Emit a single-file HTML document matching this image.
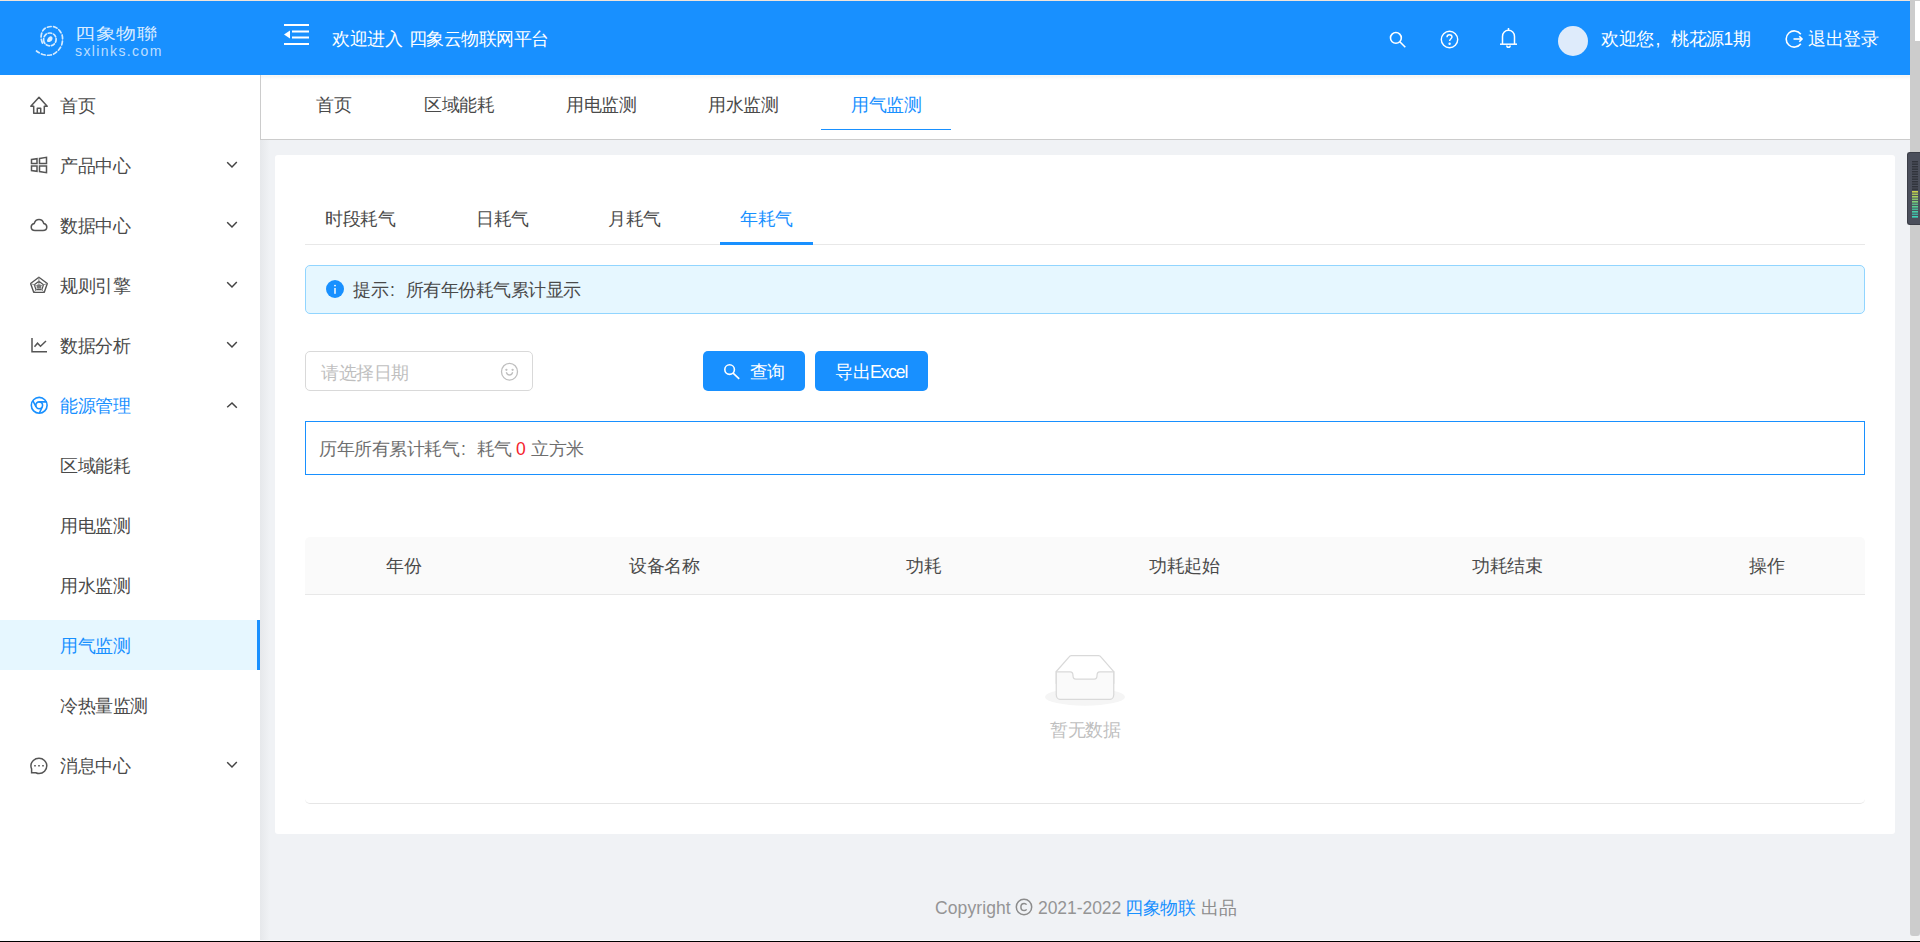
<!DOCTYPE html>
<html><head><meta charset="utf-8">
<style>
*{box-sizing:border-box;margin:0;padding:0}
html,body{width:1920px;height:942px;overflow:hidden;background:#f0f2f5;font-family:"Liberation Sans",sans-serif;font-size:17.5px;letter-spacing:-0.5px;color:#4a4a4a}
.abs{position:absolute}
.t{position:absolute;white-space:nowrap;line-height:20px}
#topline{left:0;top:0;width:1910px;height:1px;background:#f0e4da}
#header{left:0;top:1px;width:1910px;height:74px;background:#1890ff}
#sider{left:0;top:75px;width:260px;height:865px;background:#fff}
#sshadow{left:260px;top:140px;width:10px;height:800px;background:linear-gradient(90deg,#e6e8eb,#f0f2f5)}
#tabbar{left:260px;top:75px;width:1650px;height:65px;background:#fff;border-left:1px solid #ccc;border-bottom:1px solid #ccc}
#card{left:275px;top:155px;width:1620px;height:679px;background:#fff;border-radius:3px}
#vscroll{left:1910px;top:0;width:10px;height:936px;background:#cccccc;border-radius:0 0 3px 3px}
#bottomline{left:0;top:941px;width:1920px;height:1px;background:#000}
#bottomlight{left:0;top:940px;width:1920px;height:1px;background:#fbfcfd}
.mi{position:absolute;left:0;width:260px;height:50px}
.mi .ic{position:absolute;left:30px;top:16px;width:18px;height:18px}
.mi .tx{position:absolute;left:60px;top:16px;line-height:20px;white-space:nowrap}
.mi .ar{position:absolute;left:226px;top:21px;width:12px;height:8px}
.fw{display:inline-block;width:17.5px;padding-left:2px;letter-spacing:0}
.sel{background:#e6f7ff;color:#1890ff}
.sel:after{content:"";position:absolute;right:0;top:0;width:3px;height:50px;background:#1890ff}
</style></head><body>
<div class="abs" id="topline"></div>
<div class="abs" id="header"></div>
<div class="abs" id="sider"></div>
<div class="abs" id="sshadow"></div>
<div class="abs" id="tabbar"></div>
<div class="abs" id="card"></div>

<div class="abs" style="left:261px;top:75px;width:1649px;height:5px;background:linear-gradient(#fcfaf3 0,#f4f5f5 25%,#fafbfb 60%,#fff 100%)"></div>
<!-- header content -->
<svg class="abs" style="left:30px;top:20px" width="40" height="40" viewBox="0 0 40 40" fill="none" stroke="rgba(255,255,255,.82)" stroke-width="1.7" stroke-linecap="round">
  <path d="M12.5 23 C11 20 10.8 16.5 11.5 14 C12.3 11 13.5 9.3 15.5 8 C17.8 6.8 20.5 6.3 23 6.5 C25.8 7 27.8 8.5 29.5 10.5 C31.2 12.8 32.5 15 32.5 17.5 C32.7 20.5 32.3 23 31.5 25.5 C30.3 28 29 30 27 31.5 C25 33.5 23 34.6 20.5 35 C18 35.5 15.5 35.2 13 34.5 C10.5 33.7 8.3 32.5 6.5 31" stroke-dasharray="3.8 2.4"/>
  <path d="M14 22 C13.2 19.5 13.6 16.8 15.5 14.8 C17.5 12.8 20.5 12.5 23 13.8 C25.2 15 26.5 17.5 26 20.5 C25.5 23.5 23 25.8 20 25.8 C17.5 25.8 15.3 24.5 14 22" stroke-dasharray="3.4 2"/>
  <path d="M17 20.5 C17.5 18.5 18.5 17 20 16.5 C21.5 16 22.8 17 22.5 18.8 C22.2 20.5 21 21.8 19.5 22 C18 22.2 16.8 21.8 17 20.5Z" fill="rgba(255,255,255,.85)" stroke="none"/>
</svg>
<div class="t" style="left:75px;top:25px;color:rgba(255,255,255,.85);font-size:20px;letter-spacing:0.6px;line-height:20px;transform:scaleY(.8);transform-origin:0 0">四象物聯</div>
<div class="t" style="left:75px;top:41px;color:rgba(255,255,255,.72);font-size:14px;letter-spacing:1.4px;line-height:20px">sxlinks.com</div>

<svg class="abs" style="left:284px;top:24px" width="25" height="21" viewBox="0 0 25 21" fill="#fff">
  <rect x="0" y="0" width="25" height="2"/><rect x="8" y="6.5" width="17" height="2"/><rect x="8" y="12.5" width="17" height="2"/><rect x="0" y="19" width="25" height="2"/>
  <path d="M0 10.5 L6 6.5 L6 14.5Z"/>
</svg>
<div class="t" style="left:332px;top:29px;color:#fff;word-spacing:2.5px">欢迎进入 四象云物联网平台</div>

<!-- header right icons -->
<svg class="abs" style="left:1388.5px;top:31px" width="18" height="18" viewBox="0 0 18 18" fill="none" stroke="#fff" stroke-width="1.6">
  <circle cx="6.9" cy="6.9" r="5.4"/><path d="M10.8 10.8 L16.3 16.3"/>
</svg>
<svg class="abs" style="left:1440px;top:30px" width="19" height="19" viewBox="0 0 19 19" fill="none" stroke="#fff" stroke-width="1.4">
  <circle cx="9.5" cy="9.5" r="8.2"/><path d="M7 7.3 C7 5.8 8.1 4.8 9.5 4.8 C10.9 4.8 12 5.8 12 7.1 C12 8.6 9.6 9 9.6 11"/><circle cx="9.6" cy="13.7" r=".5" fill="#fff"/>
</svg>
<svg class="abs" style="left:1499px;top:27px" width="19" height="22" viewBox="0 0 19 22" fill="none" stroke="#fff" stroke-width="1.5">
  <path d="M3.5 17 V9.5 C3.5 5.8 6.2 3.3 9.5 3.3 C12.8 3.3 15.5 5.8 15.5 9.5 V17"/><path d="M1 17.2 H18"/><path d="M9.5 1 V3.3"/><path d="M7.8 18.5 C7.8 19.8 8.6 20.3 9.5 20.3 C10.4 20.3 11.2 19.8 11.2 18.5"/>
</svg>
<div class="abs" style="left:1558px;top:26px;width:30px;height:30px;border-radius:50%;background:#deebfb"></div>
<div class="t" style="left:1601px;top:29px;color:#fff">欢迎您<span class="fw">,</span>桃花源1期</div>
<svg class="abs" style="left:1784px;top:29px" width="20" height="20" viewBox="0 0 20 20" fill="none" stroke="#fff" stroke-width="1.6">
  <path d="M16.8 5.2 A8.1 8.1 0 1 0 16.8 14.8"/><path d="M9.5 10 H18"/><path d="M15.3 7.3 L18 10 L15.3 12.7"/>
</svg>
<div class="t" style="left:1808px;top:29px;color:#fff">退出登录</div>

<!-- sidebar menu -->
<div class="mi" style="top:80px">
  <svg class="ic" style="left:29px;top:15px;width:20px;height:20px" viewBox="0 0 20 20" fill="none" stroke="#555" stroke-width="1.5" stroke-linejoin="round"><path d="M1.8 11.2 L10 2.3 L18.2 11.2 H15.3 V18.2 H4.7 V11.2Z M8.3 18.2 V13.3 H11.7 V18.2"/></svg>
  <div class="tx">首页</div>
</div>
<div class="mi" style="top:140px">
  <svg class="ic" viewBox="0 0 18 18" fill="none" stroke="#555" stroke-width="1.5"><path d="M1.5 3.5 L7 2.7 V7.5 H1.5Z M9.5 2.4 L16.5 1.3 V7.5 H9.5Z M1.5 10 H7 V15.3 L1.5 14.5Z M9.5 10 H16.5 V16.7 L9.5 15.6Z"/></svg>
  <div class="tx">产品中心</div>
  <svg class="ar" viewBox="0 0 12 8" fill="none" stroke="#444" stroke-width="1.5"><path d="M1.2 1.3 L6 6 L10.8 1.1"/></svg>
</div>
<div class="mi" style="top:200px">
  <svg class="ic" viewBox="0 0 18 18" fill="none" stroke="#555" stroke-width="1.5"><path d="M5 14.5 H13 C15.2 14.5 16.8 13 16.8 11 C16.8 9.1 15.5 7.8 13.8 7.5 C13 5 11.2 3.6 9 3.6 C6.8 3.6 5 5 4.2 7.5 C2.5 7.8 1.2 9.1 1.2 11 C1.2 13 2.8 14.5 5 14.5Z"/></svg>
  <div class="tx">数据中心</div>
  <svg class="ar" viewBox="0 0 12 8" fill="none" stroke="#444" stroke-width="1.5"><path d="M1.2 1.3 L6 6 L10.8 1.1"/></svg>
</div>
<div class="mi" style="top:260px">
  <svg class="ic" viewBox="0 0 18 18" fill="none" stroke="#555" stroke-width="1.4" stroke-linejoin="round"><path d="M8.9 1.3 L17.3 7.5 L14.2 16.4 H3.8 L0.6 7.5Z"/><path d="M8.9 5.2 L13.5 8.7 L11.8 13.7 H6 L4.3 8.7Z" stroke-width="1.2"/><path d="M8.9 1.3 V10.5 M17.3 7.5 L8.9 10.5 L0.6 7.5 M14.2 16.4 L8.9 10.5 L3.8 16.4" stroke-width=".9" stroke="#888"/><path d="M7.3 8.5 L10.5 8.5 L11.5 11.5 L8.9 13 L6.5 11.5Z" fill="#777" stroke="none"/></svg>
  <div class="tx">规则引擎</div>
  <svg class="ar" viewBox="0 0 12 8" fill="none" stroke="#444" stroke-width="1.5"><path d="M1.2 1.3 L6 6 L10.8 1.1"/></svg>
</div>
<div class="mi" style="top:320px">
  <svg class="ic" viewBox="0 0 18 18" fill="none" stroke="#555" stroke-width="1.5"><path d="M2 2 V15.7 H17"/><path d="M4.5 10.7 L7.5 7.2 L10.5 10.3 L16 5"/></svg>
  <div class="tx">数据分析</div>
  <svg class="ar" viewBox="0 0 12 8" fill="none" stroke="#444" stroke-width="1.5"><path d="M1.2 1.3 L6 6 L10.8 1.1"/></svg>
</div>
<div class="mi" style="top:380px;color:#1890ff">
  <svg class="ic" style="top:16px" viewBox="0 0 18 18" fill="none" stroke="#1890ff" stroke-width="1.6"><circle cx="9.2" cy="9.3" r="7.9"/><circle cx="9.2" cy="9.3" r="3.4"/><path d="M9.2 5.9 H16.6 M2.8 4.6 L6.1 10.8 M12.2 11 L9.4 17"/></svg>
  <div class="tx">能源管理</div>
  <svg class="ar" viewBox="0 0 12 8" fill="none" stroke="#444" stroke-width="1.5"><path d="M1.2 6.3 L6 2 L10.8 6.8"/></svg>
</div>
<div class="mi" style="top:440px"><div class="tx">区域能耗</div></div>
<div class="mi" style="top:500px"><div class="tx">用电监测</div></div>
<div class="mi" style="top:560px"><div class="tx">用水监测</div></div>
<div class="mi sel" style="top:620px"><div class="tx">用气监测</div></div>
<div class="mi" style="top:680px"><div class="tx">冷热量监测</div></div>
<div class="mi" style="top:740px">
  <svg class="ic" style="top:16.7px" viewBox="0 0 18 18" fill="none" stroke="#555" stroke-width="1.5"><path d="M9 1.3 C13.2 1.3 16.8 4.6 16.8 8.8 C16.8 13 13.4 16.6 9 16.6 C7.8 16.6 6.9 16.3 5.8 15.8 H1.6 V11.8 C1.1 10.9 .9 9.9 .9 8.8 C.9 4.6 4.6 1.3 9 1.3Z"/><path d="M4.2 8.8 H5.8 M8.2 8.8 H9.8 M12.2 8.8 H13.8" stroke-width="1.6"/></svg>
  <div class="tx">消息中心</div>
  <svg class="ar" viewBox="0 0 12 8" fill="none" stroke="#444" stroke-width="1.5"><path d="M1.2 1.3 L6 6 L10.8 1.1"/></svg>
</div>

<!-- top tabs -->
<div class="t" style="left:316px;top:95px">首页</div>
<div class="t" style="left:424px;top:95px">区域能耗</div>
<div class="t" style="left:566px;top:95px">用电监测</div>
<div class="t" style="left:708px;top:95px">用水监测</div>
<div class="t" style="left:851px;top:95px;color:#1890ff">用气监测</div>
<div class="abs" style="left:821px;top:129px;width:130px;height:1px;background:#1890ff"></div>

<!-- inner tabs -->
<div class="t" style="left:325px;top:209px">时段耗气</div>
<div class="t" style="left:476px;top:209px">日耗气</div>
<div class="t" style="left:608px;top:209px">月耗气</div>
<div class="t" style="left:740px;top:209px;color:#1890ff">年耗气</div>
<div class="abs" style="left:305px;top:244px;width:1560px;height:1px;background:#e8e8e8"></div>
<div class="abs" style="left:720px;top:242px;width:93px;height:3px;background:#1890ff"></div>

<!-- alert -->
<div class="abs" style="left:305px;top:265px;width:1560px;height:49px;background:#e6f7ff;border:1px solid #91d5ff;border-radius:5px"></div>
<svg class="abs" style="left:326px;top:280px" width="18" height="18" viewBox="0 0 18 18"><circle cx="9" cy="9" r="9" fill="#1890ff"/><rect x="8.1" y="8" width="1.8" height="5.8" fill="#d3e9ff"/><rect x="8.1" y="4.9" width="1.8" height="1.4" fill="#eef6ff"/></svg>
<div class="t" style="left:353px;top:280px">提示<span class="fw">:</span>所有年份耗气累计显示</div>

<!-- date input -->
<div class="abs" style="left:305px;top:351px;width:228px;height:40px;border:1px solid #d9d9d9;border-radius:5px;background:#fff"></div>
<div class="t" style="left:321px;top:363px;color:#bfbfbf">请选择日期</div>
<svg class="abs" style="left:500px;top:361.5px" width="19" height="19" viewBox="0 0 19 19" fill="none" stroke="#bfbfbf" stroke-width="1.3"><ellipse cx="9.5" cy="9.7" rx="8" ry="8.4"/><path d="M6.3 10.2 C7 12.3 8.2 13 9.5 13 C10.8 13 12 12.3 12.7 10.2"/><circle cx="6.4" cy="7.8" r=".5"/><circle cx="12.6" cy="7.8" r=".5"/></svg>

<!-- buttons -->
<div class="abs" style="left:703px;top:351px;width:102px;height:40px;background:#1890ff;border-radius:5px"></div>
<svg class="abs" style="left:723px;top:364px" width="17" height="17" viewBox="0 0 17 17" fill="none" stroke="#fff" stroke-width="1.6"><circle cx="6.6" cy="5.6" r="4.8"/><path d="M10.1 9.1 L16.2 14.8"/></svg>
<div class="t" style="left:749.5px;top:362px;color:#fff">查询</div>
<div class="abs" style="left:815px;top:351px;width:113px;height:40px;background:#1890ff;border-radius:5px"></div>
<div class="t" style="left:835px;top:362px;color:#fff">导出<span style="letter-spacing:-1.1px">Excel</span></div>

<!-- summary -->
<div class="abs" style="left:305px;top:421px;width:1560px;height:54px;border:1px solid #1890ff;background:#fff"></div>
<div class="t" style="left:319px;top:439px;color:#6e6e6e">历年所有累计耗气<span class="fw">:</span>耗气 <span style="color:#f5222d;margin-right:2px">0</span> 立方米</div>

<!-- table -->
<div class="abs" style="left:305px;top:537px;width:1560px;height:58px;background:#fafafa;border-bottom:1px solid #e8e8e8;border-radius:5px 5px 0 0"></div>
<div class="t" style="left:386px;top:556px">年份</div>
<div class="t" style="left:629px;top:556px">设备名称</div>
<div class="t" style="left:906px;top:556px">功耗</div>
<div class="t" style="left:1149px;top:556px">功耗起始</div>
<div class="t" style="left:1472px;top:556px">功耗结束</div>
<div class="t" style="left:1749px;top:556px">操作</div>
<div class="abs" style="left:305px;top:794px;width:1560px;height:10px;border-bottom:1px solid #e6e6e6;border-radius:0 0 5px 5px"></div>

<svg class="abs" style="left:1045px;top:654px" width="80" height="52" viewBox="0 0 64 41"><g transform="translate(0 1)" fill="none" fill-rule="evenodd"><ellipse cx="32" cy="33" rx="32" ry="7" fill="#f5f5f5"/><g fill-rule="nonzero" stroke="#d9d9d9"><path d="M55 12.76L44.854 1.258C44.367.474 43.656 0 42.907 0H21.093c-.749 0-1.46.474-1.947 1.257L9 12.761V22h46v-9.24z"/><path d="M41.613 15.931c0-1.605.994-2.93 2.227-2.931H55v18.137C55 33.26 53.68 35 52.05 35h-40.1C10.32 35 9 33.259 9 31.137V13h11.16c1.233 0 2.227 1.323 2.227 2.928v.022c0 1.605 1.005 2.901 2.237 2.901h14.752c1.232 0 2.237-1.308 2.237-2.913v-.007z" fill="#fafafa"/></g></g></svg>
<div class="t" style="left:1050px;top:720px;color:#bfbfbf">暂无数据</div>

<!-- footer -->
<div class="t" style="left:935px;top:898px;color:#959595;letter-spacing:0.1px">Copyright</div>
<svg class="abs" style="left:1015px;top:898px" width="18" height="18" viewBox="0 0 18 18" fill="none" stroke="#8c8c8c" stroke-width="1.5"><circle cx="9" cy="9" r="7.7"/><path d="M11.6 6.6 C11 5.8 10.2 5.4 9.2 5.4 C7.2 5.4 5.9 7 5.9 9 C5.9 11 7.2 12.6 9.2 12.6 C10.2 12.6 11 12.2 11.6 11.4"/></svg>
<div class="t" style="left:1038px;top:898px;color:#959595;letter-spacing:-0.05px">2021-2022</div>
<div class="t" style="left:1125px;top:898px;color:#1890ff">四象物联</div>
<div class="t" style="left:1201px;top:898px;color:#8c8c8c">出品</div>

<div class="abs" id="vscroll"></div>
<div class="abs" style="left:1915px;top:1px;width:5px;height:40px;background:#fff"></div>
<div class="abs" style="left:1907px;top:152px;width:13px;height:73px;background:#4b4f5b;border-radius:3px 0 0 3px;border:1px solid #3b3e47;border-right:0"></div>
<svg class="abs" style="left:1912px;top:161px" width="6" height="58" viewBox="0 0 6 58">
<g fill="#30333b"><rect y="0" width="6" height="1.4"/><rect y="2.5" width="6" height="1.4"/><rect y="5" width="6" height="1.4"/><rect y="7.5" width="6" height="1.4"/><rect y="10" width="6" height="1.4"/><rect y="12.5" width="6" height="1.4"/><rect y="15" width="6" height="1.4"/><rect y="17.5" width="6" height="1.4"/><rect y="20" width="6" height="1.4"/><rect y="22.5" width="6" height="1.4"/><rect y="25" width="6" height="1.4"/><rect y="27.5" width="6" height="1.4"/></g>
<rect y="30" width="6" height="1.6" fill="#c9d44a"/><rect y="32.5" width="6" height="1.6" fill="#a8c65a"/><rect y="35" width="6" height="1.6" fill="#a6d35e"/><rect y="37.5" width="6" height="1.6" fill="#86c070"/><rect y="40" width="6" height="1.6" fill="#7fd37a"/><rect y="42.5" width="6" height="1.6" fill="#5fb887"/><rect y="45" width="6" height="1.6" fill="#55cf90"/><rect y="47.5" width="6" height="1.6" fill="#4bb395"/><rect y="50" width="6" height="1.6" fill="#48d0a8"/><rect y="52.5" width="6" height="1.6" fill="#3fb0a0"/><rect y="55" width="6" height="1.6" fill="#3dd6b8"/>
</svg>
<div class="abs" style="left:1910px;top:936px;width:10px;height:4px;background:#f5f5f5"></div>
<div class="abs" id="bottomlight"></div>
<div class="abs" id="bottomline"></div>
</body></html>
